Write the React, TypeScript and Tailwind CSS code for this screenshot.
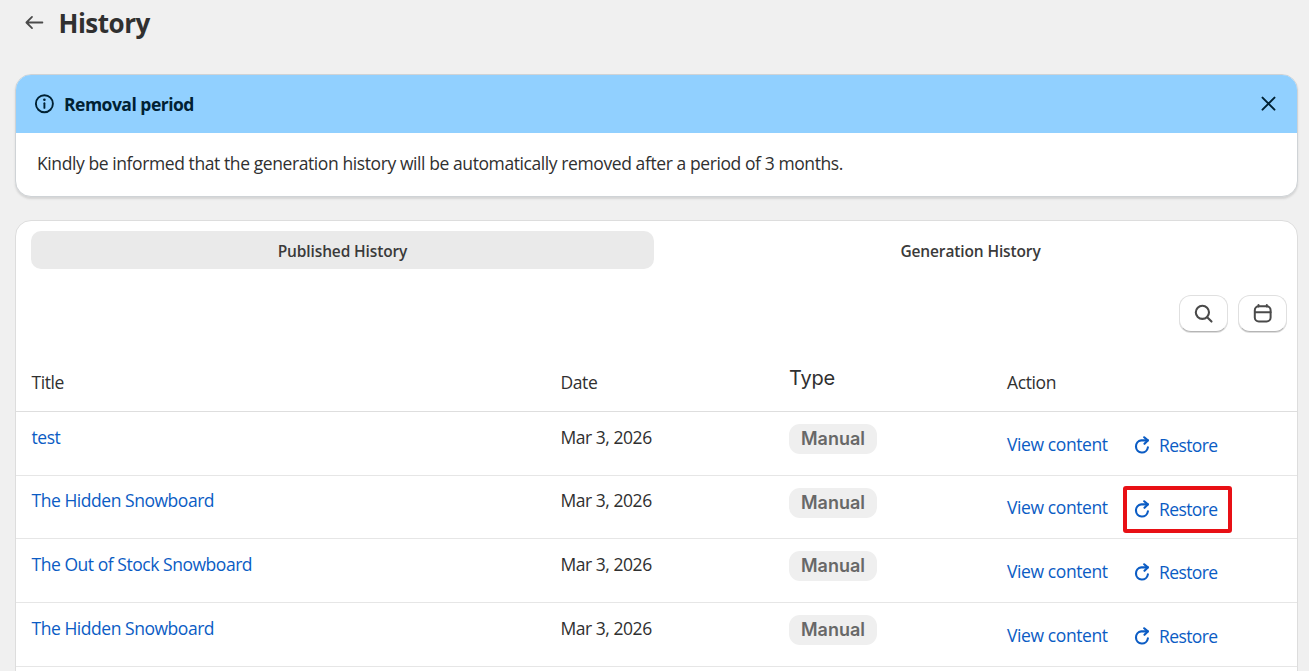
import React from "react";

type Row = { title: string; height: string; type: string; lead: string; actionLead: string; marked?: boolean };

const rows: Row[] = [
  { title: "test", height: "h-[64px]", type: "Manual", lead: "leading-[50px]", actionLead: "leading-[65px]" },
  { title: "The Hidden Snowboard", height: "h-[63px]", type: "Manual", lead: "leading-[48px]", actionLead: "leading-[63px]", marked: true },
  { title: "The Out of Stock Snowboard", height: "h-[64px]", type: "Manual", lead: "leading-[50px]", actionLead: "leading-[65px]" },
  { title: "The Hidden Snowboard", height: "h-[64px]", type: "Manual", lead: "leading-[50px]", actionLead: "leading-[65px]" },
];

const columns = "grid grid-cols-[529px_228.5px_218px_1fr] pl-[15.5px]";

function BackIcon() {
  return (
    <svg width="20" height="16" viewBox="0 0 20 16" fill="none" stroke="#4a4a4a" strokeWidth="1.8" strokeLinecap="round" strokeLinejoin="round">
      <path d="M18.4 7.5H2.8M8 1.9L2.4 7.5 8 13.1" />
    </svg>
  );
}

function InfoIcon() {
  return (
    <svg width="20" height="20" viewBox="0 0 20 20" fill="none" stroke="#002133">
      <circle cx="10.4" cy="9.7" r="8.5" strokeWidth="1.9" />
      <path d="M10.4 9.3v4.6" strokeWidth="1.9" strokeLinecap="round" />
      <circle cx="10.4" cy="5.8" r="1.3" fill="#002133" stroke="none" />
    </svg>
  );
}

function CloseIcon() {
  return (
    <svg width="16" height="16" viewBox="0 0 16 16" fill="none" stroke="#002133" strokeWidth="2" strokeLinecap="round">
      <path d="M2.5 1.6l12 12M14.5 1.6l-12 12" />
    </svg>
  );
}

function SearchIcon() {
  return (
    <svg width="20" height="20" viewBox="0 0 20 20" fill="none" stroke="#4a4a4a" strokeWidth="2.1" strokeLinecap="round">
      <circle cx="8.4" cy="8.3" r="6.6" />
      <path d="M13.2 13.3l4.3 4.3" />
    </svg>
  );
}

function CalendarIcon() {
  return (
    <svg width="20" height="20" viewBox="0 0 20 20" fill="none" stroke="#4a4a4a" strokeWidth="2" strokeLinecap="round">
      <rect x="1.8" y="2.3" width="15.8" height="15.2" rx="4" />
      <path d="M2 8.3h15.6M5.5 1v1.4M13.8 1v1.4" />
    </svg>
  );
}

function RestoreIcon() {
  return (
    <svg width="18" height="20" viewBox="0 0 18 20" fill="none" stroke="#0b5cc4" strokeWidth="2.1" strokeLinecap="round" strokeLinejoin="round">
      <path d="M14.9 4.4H8.2a6 6.1 0 1 0 6.7 7" />
      <path d="M11.2 1.3l3.6 3.1-3.3 3.4" />
    </svg>
  );
}

const iconButton =
  "flex h-[37px] w-[49px] items-center justify-center rounded-[12px] border border-[#e0e0e0] border-b-[#b5b5b5] bg-white shadow-[0_1px_0_#dedede]";

export default function App() {
  return (
    <div className="h-[671px] overflow-hidden bg-[#f0f0f0] pl-[15px] pr-[11px] font-['Open_Sans','Noto_Sans',sans-serif] text-[17.5px] text-[#303030]">
      <header className="flex h-[74px] items-start pl-[9px]">
        <button className="mt-[15px]"><BackIcon /></button>
        <h1 className="ml-[14.5px] text-[26px] leading-[47px] font-bold tracking-[-0.5px]">History</h1>
      </header>

      <section className="h-[123px] overflow-hidden rounded-[16px] border border-[#cfd3d6] bg-white shadow-[0_2px_2px_#d5d5d5]">
        <div className="flex h-[58px] items-center bg-[#91d0ff] pr-[21px] pl-[18px] text-[#002133]">
          <InfoIcon />
          <h2 className="ml-[10px] text-[17.5px] font-bold tracking-[-0.5px]">Removal period</h2>
          <button className="ml-auto"><CloseIcon /></button>
        </div>
        <p className="pl-[21px] leading-[61px] tracking-[-0.41px]">
          Kindly be informed that the generation history will be automatically removed after a period of 3 months.
        </p>
      </section>

      <section className="mt-[23px] h-[500px] rounded-[16px] border border-[#dddddd] bg-white">
        <nav className="grid grid-cols-2 gap-[5px] px-[15px] pt-[10px] text-center text-[15.5px] leading-[40px] font-semibold tracking-[-0.13px] text-[#3a3a3a]">
          <button className="h-[38px] rounded-[10px] bg-[#eaeaea]">Published History</button>
          <button className="h-[38px]">Generation History</button>
        </nav>
        <div className="flex justify-end gap-[10px] pt-[26px] pr-[10px]">
          <button className={iconButton}><SearchIcon /></button>
          <button className={iconButton}><CalendarIcon /></button>
        </div>

        <div className={`${columns} mt-[22px] h-[58px] border-b border-[#dedede] leading-[57px] tracking-[-0.4px]`}>
          <div>Title</div>
          <div>Date</div>
          <div className="font-['Inter',sans-serif] text-[20px] leading-[48px] tracking-[-0.2px]">Type</div>
          <div>Action</div>
        </div>
        {rows.map((row, i) => (
          <div key={i} className={`${columns} ${row.height} border-b border-[#e6e6e6] tracking-[-0.46px] text-[#0b5cc4]`}>
            <a className={row.lead}>{row.title}</a>
            <div className={`${row.lead} text-[#303030]`}>Mar 3, 2026</div>
            <div className="pt-[12px]">
              <span className="flex h-[30px] w-[88px] items-center justify-center rounded-[11px] bg-[#efefef] pb-[2px] font-['Inter',sans-serif] text-[18px] font-semibold tracking-normal text-[#686868]">
                {row.type}
              </span>
            </div>
            <div className="flex items-start">
              <a className={`w-[116px] tracking-[-0.4px] ${row.actionLead}`}>View content</a>
              <a
                className={`mt-[10px] flex h-[47px] w-[109px] items-center border-4 pl-[6px] leading-[39px] ${
                  row.marked ? "rounded-[3px] border-[#e81015]" : "border-transparent"
                }`}
              >
                <RestoreIcon />
                <span className="ml-[8px] tracking-[-0.6px]">Restore</span>
              </a>
            </div>
          </div>
        ))}
      </section>
    </div>
  );
}
